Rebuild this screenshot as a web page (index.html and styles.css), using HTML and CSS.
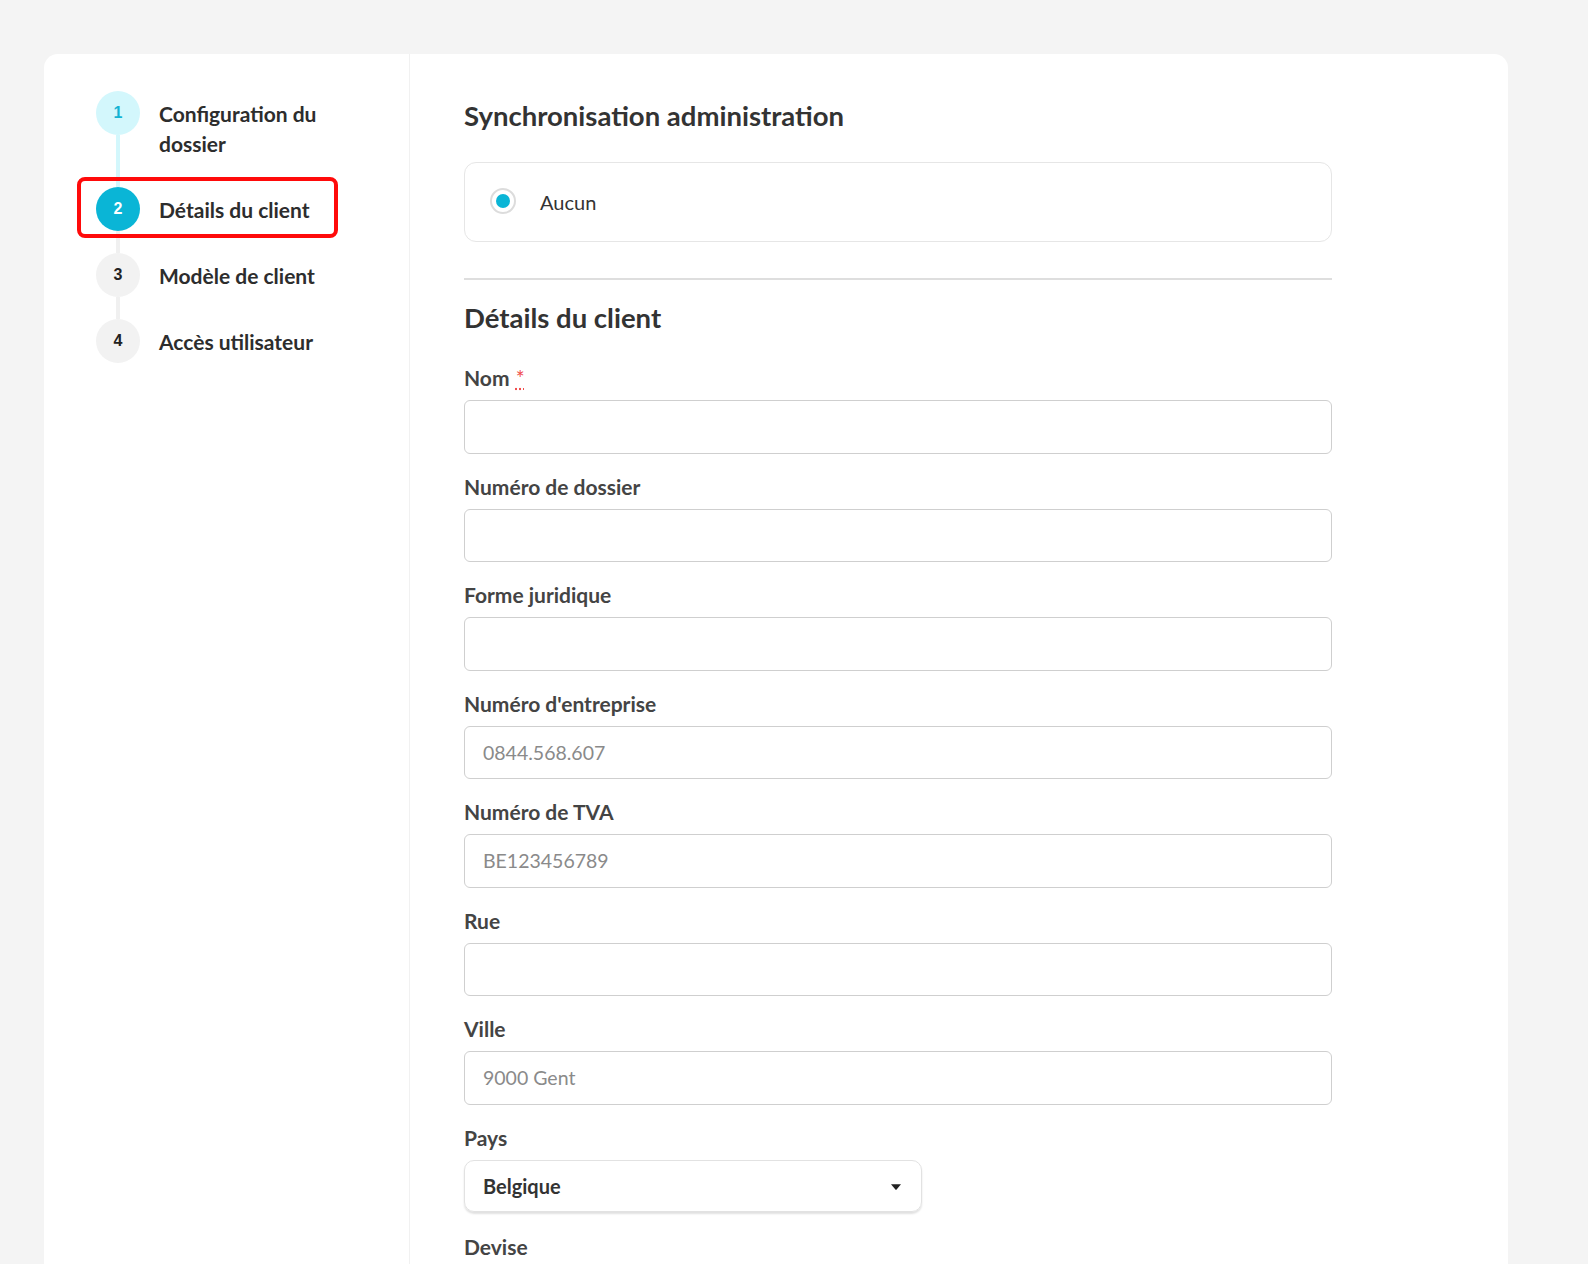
FILE: index.html
```html
<!DOCTYPE html>
<html lang="fr">
<head>
<meta charset="utf-8">
<title>Détails du client</title>
<link rel="stylesheet" href="styles.css">
</head>
<body>
<div class="card">
  <aside class="sidebar">
    <ol class="steps">
      <li class="step step-done">
        <span class="circle">1</span>
        <span class="step-label">Configuration du<br>dossier</span>
      </li>
      <li class="step step-active">
        <span class="circle">2</span>
        <span class="step-label">Détails du client</span>
        <span class="highlight"></span>
      </li>
      <li class="step">
        <span class="circle">3</span>
        <span class="step-label">Modèle de client</span>
      </li>
      <li class="step step-last">
        <span class="circle">4</span>
        <span class="step-label">Accès utilisateur</span>
      </li>
    </ol>
  </aside>
  <main class="main">
    <h2 class="heading">Synchronisation administration</h2>
    <div class="radio-box">
      <span class="radio"><span class="radio-dot"></span></span>
      <span class="radio-text">Aucun</span>
    </div>
    <hr class="divider">
    <h2 class="heading heading-2">Détails du client</h2>

    <div class="field">
      <label class="label">Nom <abbr class="req" title="obligatoire">*</abbr></label>
      <div class="input"></div>
    </div>
    <div class="field">
      <label class="label">Numéro de dossier</label>
      <div class="input"></div>
    </div>
    <div class="field">
      <label class="label">Forme juridique</label>
      <div class="input"></div>
    </div>
    <div class="field">
      <label class="label">Numéro d'entreprise</label>
      <div class="input"><span class="placeholder">0844.568.607</span></div>
    </div>
    <div class="field">
      <label class="label">Numéro de TVA</label>
      <div class="input"><span class="placeholder">BE123456789</span></div>
    </div>
    <div class="field">
      <label class="label">Rue</label>
      <div class="input"></div>
    </div>
    <div class="field">
      <label class="label">Ville</label>
      <div class="input"><span class="placeholder">9000 Gent</span></div>
    </div>
    <div class="field field-select">
      <label class="label">Pays</label>
      <div class="select">
        <span class="select-value">Belgique</span>
        <svg class="caret" width="12" height="8" viewBox="0 0 12 8"><path d="M1 1.2 L11 1.2 L6.6 6.6 Q6 7.3 5.4 6.6 Z" fill="#222"/></svg>
      </div>
    </div>
    <div class="field">
      <label class="label">Devise</label>
    </div>
  </main>
</div>
</body>
</html>
```
FILE: styles.css
```css
* { box-sizing: border-box; }
html, body {
  margin: 0;
  padding: 0;
  background: #f4f4f4;
  font-family: Lato, "Open Sans", "Liberation Sans", sans-serif;
  color: #333;
  height: 1264px;
  overflow: hidden;
}
.card {
  margin: 54px 0 0 44px;
  width: 1464px;
  height: 1300px;
  background: #fff;
  border-radius: 14px;
  display: flex;
}
.sidebar {
  width: 366px;
  flex: none;
  border-right: 1px solid #f1f1f1;
  padding: 37px 0 0 52px;
}
.steps {
  list-style: none;
  margin: 0;
  padding: 0;
}
.step {
  position: relative;
  display: flex;
  align-items: flex-start;
  gap: 19px;
  padding-bottom: 22px;
}
.step::after {
  content: "";
  position: absolute;
  left: 20px;
  top: 44px;
  bottom: 0;
  width: 4px;
  background: #f0f0f0;
  z-index: 0;
}
.step-done::after { background: #d3f7fc; }
.step-last::after { display: none; }
.circle {
  position: relative;
  z-index: 1;
  flex: none;
  width: 44px;
  height: 44px;
  border-radius: 50%;
  background: #f2f2f2;
  color: #222;
  font-family: "Liberation Sans", Arial, sans-serif;
  font-weight: 700;
  font-size: 16px;
  display: flex;
  align-items: center;
  justify-content: center;
}
.step-done .circle { background: #d3f7fc; color: #13b3d3; }
.step-active .circle { background: #0ab5d6; color: #fff; }
.step-label {
  padding: 8px 0 6px;
  font-size: 21px;
  line-height: 30px;
  font-weight: 700;
  color: #2d2d2d;
}
.highlight {
  position: absolute;
  left: -19px;
  top: -10px;
  width: 261px;
  height: 61px;
  border: 4px solid #ff0a0a;
  border-radius: 8px;
  z-index: 2;
}
.main {
  padding: 46px 0 0 54px;
  width: 922px;
}
.heading {
  margin: 0;
  font-size: 27.5px;
  line-height: 32px;
  font-weight: 700;
  color: #333;
}
.radio-box {
  margin-top: 30px;
  height: 80px;
  border: 1px solid #e6e6e6;
  border-radius: 12px;
  display: flex;
  align-items: center;
  padding-left: 25px;
}
.radio {
  width: 26px;
  height: 26px;
  border-radius: 50%;
  border: 2px solid #dcdcdc;
  display: flex;
  align-items: center;
  justify-content: center;
  margin-top: -2px;
}
.radio-dot {
  width: 14px;
  height: 14px;
  border-radius: 50%;
  background: #0ab5d6;
}
.radio-text {
  margin-left: 24px;
  font-size: 20px;
  color: #333;
}
.divider {
  margin: 36px 0 0;
  border: 0;
  height: 2px;
  background: #dedede;
}
.heading-2 { margin-top: 22px; margin-bottom: 32px; }
.field { margin-bottom: 21px; }
.field-select { margin-bottom: 23px; }
.label {
  display: block;
  font-size: 21px;
  line-height: 24px;
  font-weight: 700;
  color: #444;
  margin-bottom: 10px;
}
.req {
  color: #f04e4e;
  font-size: 21px;
  font-weight: 400;
  text-decoration: underline dotted #f04e4e;
  text-underline-offset: 2px;
  margin-left: 1px;
}
.input {
  height: 53.5px;
  border: 1px solid #cfcfcf;
  border-radius: 6px;
  display: flex;
  align-items: center;
  padding-left: 18px;
}
.placeholder {
  font-size: 19.5px;
  color: #8a8a8a;
}
.select {
  width: 458px;
  height: 52px;
  border: 1px solid #e2e2e2;
  border-radius: 10px;
  box-shadow: 0 2px 2px rgba(0,0,0,0.12);
  display: flex;
  align-items: center;
  justify-content: space-between;
  padding: 0 19px 0 18px;
}
.select-value {
  font-size: 20px;
  font-weight: 700;
  color: #333;
}
.caret { display: block; margin-top: 2px; }
```
